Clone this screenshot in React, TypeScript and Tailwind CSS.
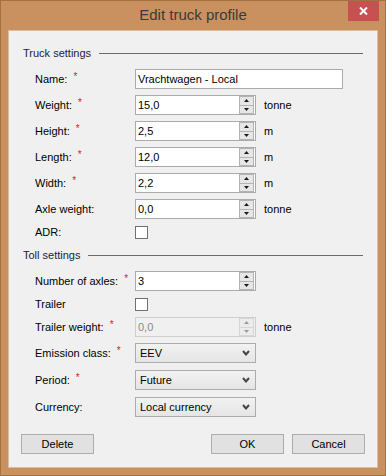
import type { ReactNode } from "react";

function Req() {
  return <span className="ml-[6px] text-[10px] leading-none text-[#e2161b] -mt-[5px]">*</span>;
}

function Row({
  label,
  req,
  unit,
  className = "",
  children,
}: {
  label: string;
  req?: boolean;
  unit?: string;
  className?: string;
  children: ReactNode;
}) {
  return (
    <div className={`flex items-center h-[20px] pl-[12px] ${className}`}>
      <div className="w-[100px] shrink-0 flex items-center whitespace-nowrap">
        <span>{label}</span>
        {req && <Req />}
      </div>
      {children}
      {unit && <span className="ml-[8px]">{unit}</span>}
    </div>
  );
}

function Arrow({ up, disabled }: { up?: boolean; disabled?: boolean }) {
  return (
    <svg width="5" height="3" viewBox="0 0 5 3">
      <path
        d={up ? "M0 3 L2.5 0 L5 3 Z" : "M0 0 L5 0 L2.5 3 Z"}
        fill={disabled ? "#9a9a9a" : "#1a1a1a"}
      />
    </svg>
  );
}

function Spin({ value, disabled }: { value: string; disabled?: boolean }) {
  return (
    <div
      className={`w-[121px] h-[20px] border flex items-center ${
        disabled ? "border-[#cfcfcf] bg-[#f0f0f0] text-[#8a8a8a]" : "border-[#ababab] bg-white"
      }`}
    >
      <span className="flex-1 pl-[2px]">{value}</span>
      <div className="flex flex-col w-[15px] h-[18px] mr-[1px]">
        <div
          className={`flex-1 flex items-center justify-center border ${
            disabled ? "border-[#d6d6d6] bg-[#ececec]" : "border-[#b3b3b3] bg-[#e6e6e6]"
          }`}
        >
          <Arrow up disabled={disabled} />
        </div>
        <div
          className={`flex-1 flex items-center justify-center border border-t-0 ${
            disabled ? "border-[#d6d6d6] bg-[#ececec]" : "border-[#b3b3b3] bg-[#e6e6e6]"
          }`}
        >
          <Arrow disabled={disabled} />
        </div>
      </div>
    </div>
  );
}

function Select({ value }: { value: string }) {
  return (
    <div className="w-[121px] h-[20px] border border-[#acacac] bg-gradient-to-b from-[#f2f2f2] to-[#e5e5e5] flex items-center justify-between pl-[4px] pr-[5px]">
      <span>{value}</span>
      <svg width="8" height="6" viewBox="0 0 8 6">
        <path d="M1 1 L4 4.5 L7 1" stroke="#454545" strokeWidth="2" fill="none" />
      </svg>
    </div>
  );
}

function Check() {
  return <div className="w-[13px] h-[13px] border border-[#707070] bg-white" />;
}

function Group({ title, className = "" }: { title: string; className?: string }) {
  return (
    <div className={`flex items-center h-[14px] gap-[8px] ${className}`}>
      <span className="text-[#1f1a3a]">{title}</span>
      <div className="flex-1 h-px bg-[#6b6b6b]" />
    </div>
  );
}

function Button({ children }: { children: ReactNode }) {
  return (
    <button className="w-[73px] h-[20px] border border-[#adadad] bg-[#e1e1e1] flex items-center justify-center text-black">
      {children}
    </button>
  );
}

export default function App() {
  return (
    <div className="w-[386px] h-[476px] bg-[#c9915f] border border-[#a3723f] flex flex-col font-['Liberation_Sans',Arial,sans-serif]">
      <div className="relative h-[29px] flex items-center justify-center">
        <span className="text-[15px] text-[#3a3a3a]">Edit truck profile</span>
        <div className="absolute right-[6px] top-0 w-[31px] h-[20px] bg-[#c75050] flex items-center justify-center">
          <svg width="9" height="8" viewBox="0 0 9 8">
            <path d="M1 0.5 L8 7.5 M8 0.5 L1 7.5" stroke="#ffffff" strokeWidth="2" />
          </svg>
        </div>
      </div>

      <div className="flex-1 mx-[7px] mb-[7px] bg-[#f0f0f0] border border-[#ddbd9b] px-[14px] text-[11px] text-black flex flex-col">
        <Group title="Truck settings" className="mt-[15px]" />

        <Row label="Name:" req className="mt-[9px]">
          <div className="w-[208px] h-[20px] border border-[#ababab] bg-white flex items-center pl-[2px]">
            Vrachtwagen - Local
          </div>
        </Row>
        <Row label="Weight:" req unit="tonne" className="mt-[6px]">
          <Spin value="15,0" />
        </Row>
        <Row label="Height:" req unit="m" className="mt-[6px]">
          <Spin value="2,5" />
        </Row>
        <Row label="Length:" req unit="m" className="mt-[6px]">
          <Spin value="12,0" />
        </Row>
        <Row label="Width:" req unit="m" className="mt-[6px]">
          <Spin value="2,2" />
        </Row>
        <Row label="Axle weight:" unit="tonne" className="mt-[6px]">
          <Spin value="0,0" />
        </Row>
        <Row label="ADR:" className="mt-[3px]">
          <Check />
        </Row>

        <Group title="Toll settings" className="mt-[6px]" />

        <Row label="Number of axles:" req className="mt-[9px]">
          <Spin value="3" />
        </Row>
        <Row label="Trailer" className="mt-[3px]">
          <Check />
        </Row>
        <Row label="Trailer weight:" req unit="tonne" className="mt-[3px]">
          <Spin value="0,0" disabled />
        </Row>
        <Row label="Emission class:" req className="mt-[6px]">
          <Select value="EEV" />
        </Row>
        <Row label="Period:" req className="mt-[7px]">
          <Select value="Future" />
        </Row>
        <Row label="Currency:" className="mt-[7px]">
          <Select value="Local currency" />
        </Row>

        <div className="flex items-center justify-between mt-[17px] -mx-[2px]">
          <Button>Delete</Button>
          <div className="flex gap-[8px]">
            <Button>OK</Button>
            <Button>Cancel</Button>
          </div>
        </div>
      </div>
    </div>
  );
}
